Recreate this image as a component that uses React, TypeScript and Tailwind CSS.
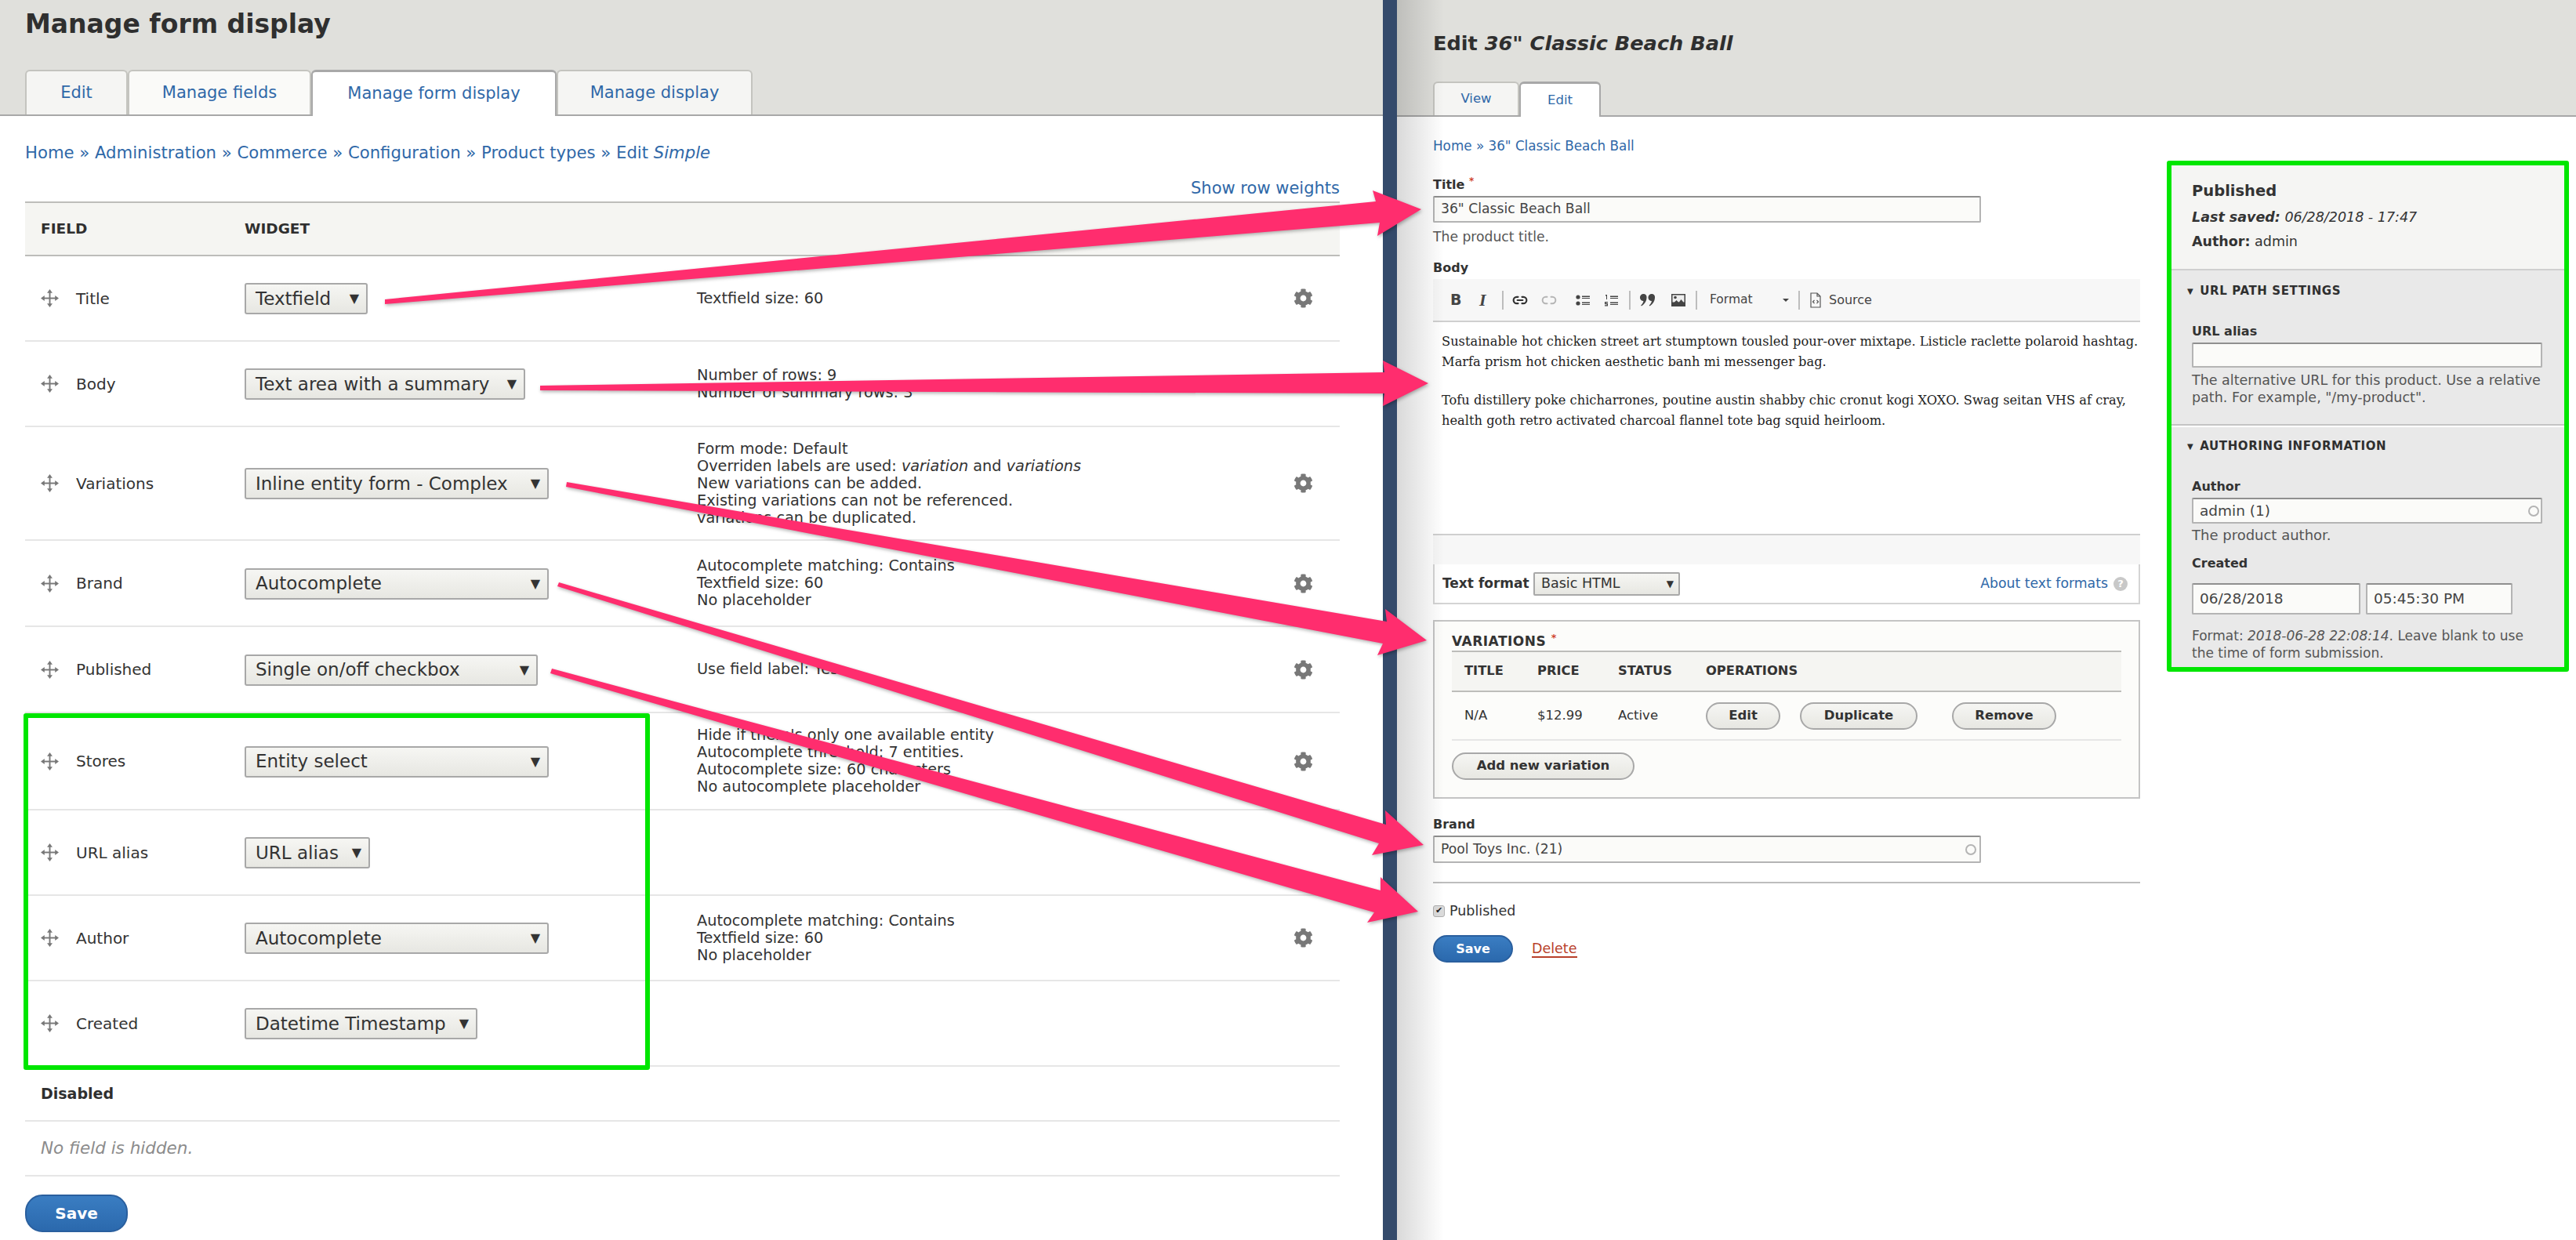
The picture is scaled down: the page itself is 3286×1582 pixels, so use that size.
import type { ReactNode } from "react";
import { FaCog } from "react-icons/fa";
import { Link2, Unlink2 } from "lucide-react";

const ROWS = [
  { label: "Title", widget: "Textfield", width: "w-[157px]", height: "h-[109px]", summary: ["Textfield size: 60"], gear: true },
  { label: "Body", widget: "Text area with a summary", width: "w-[358px]", height: "h-[109px]", summary: ["Number of rows: 9", "Number of summary rows: 3"], gear: false },
  {
    label: "Variations",
    widget: "Inline entity form - Complex",
    width: "w-[388px]",
    height: "h-[145px]",
    summary: [
      "Form mode: Default",
      <>
        Overriden labels are used: <em>variation</em> and <em>variations</em>
      </>,
      "New variations can be added.",
      "Existing variations can not be referenced.",
      "variations can be duplicated.",
    ],
    gear: true,
  },
  { label: "Brand", widget: "Autocomplete", width: "w-[388px]", height: "h-[110px]", summary: ["Autocomplete matching: Contains", "Textfield size: 60", "No placeholder"], gear: true },
  { label: "Published", widget: "Single on/off checkbox", width: "w-[374px]", height: "h-[110px]", summary: ["Use field label: Yes"], gear: true },
];

const GREEN_ROWS = [
  {
    label: "Stores",
    widget: "Entity select",
    width: "w-[388px]",
    height: "h-[124px]",
    summary: ["Hide if there's only one available entity", "Autocomplete threshold: 7 entities.", "Autocomplete size: 60 characters", "No autocomplete placeholder"],
    gear: true,
  },
  { label: "URL alias", widget: "URL alias", width: "w-[160px]", height: "h-[109px]", summary: [], gear: false },
  { label: "Author", widget: "Autocomplete", width: "w-[388px]", height: "h-[109px]", summary: ["Autocomplete matching: Contains", "Textfield size: 60", "No placeholder"], gear: true },
  { label: "Created", widget: "Datetime Timestamp", width: "w-[297px]", height: "h-[109px]", summary: [], gear: false },
];

const ARROWS = [
  "491,382 1755,257 1751,243 1813,267 1757,301 1760,284 491,388",
  "689,492 1766,475 1764,460 1822,489 1764,518 1766,502 689,498",
  "723,615 1769,793 1767,777 1820,817 1757,836 1764,821 722,621",
  "713,743 1768,1052 1767,1034 1816,1078 1750,1091 1759,1076 711,748",
  "704,853 1761,1136 1761,1119 1809,1163 1744,1177 1753,1164 702,859",
];

function DragHandle() {
  return (
    <svg viewBox="0 0 24 24" className="h-[23px] w-[23px] shrink-0 text-[#787878]" fill="currentColor">
      <path d="M11 4h2v16h-2z" />
      <path d="M3 11h18v2H3z" />
      <path d="M12 0l3.600 5H8.400zM12 24l-3.600-5h7.200zM0 12l5-3.600v7.200zM24 12l-5 3.600V8.400z" />
    </svg>
  );
}

function WidgetSelect({ value, width }: { value: string; width: string }) {
  return (
    <div className={`${width} mt-[1px] flex h-[40px] items-center justify-between rounded-[3px] border-2 border-[#a8a8a8] bg-linear-to-b from-[#f6f6f3] to-[#e7e7e2] pl-[12px] pr-[9px] text-[23px] text-[#333]`}>
      <span className="whitespace-nowrap">{value}</span>
      <span className="text-[16px] text-[#333]">▼</span>
    </div>
  );
}

type Row = (typeof ROWS)[number] | (typeof GREEN_ROWS)[number];

function FieldRow({ row }: { row: Row }) {
  return (
    <div className={`${row.height} flex items-center border-b-2 border-[#e6e6e6]`}>
      <div className="flex w-[280px] shrink-0 items-center gap-[22px] pl-[20px] text-[20px] text-[#333]">
        <DragHandle />
        <span>{row.label}</span>
      </div>
      <div className="w-[577px] shrink-0">
        <WidgetSelect value={row.widget} width={row.width} />
      </div>
      <div className="w-[761px] shrink-0 text-[19.300px] leading-[22px] text-[#333]">
        {row.summary.map((line, i) => (
          <div key={i} className="whitespace-nowrap">
            {line}
          </div>
        ))}
      </div>
      {row.gear && <FaCog className="h-[25px] w-[25px] text-[#787878]" />}
    </div>
  );
}

function Tab({ children, width, active, className }: { children: ReactNode; width: string; active?: boolean; className?: string }) {
  return (
    <div
      className={`${width} ${className ?? ""} ${active ? "relative z-10 -mb-[2px] border-x-2 border-t-[3px] border-[#a8a8a8] bg-white" : "border-x-2 border-t-2 border-[#c4c4bf] bg-[#f5f5f3]"} flex items-center justify-center rounded-t-[6px] text-[#2f68a8]`}
    >
      {children}
    </div>
  );
}

function LeftPanel() {
  return (
    <div className="w-[1764px] shrink-0 bg-white">
      <header className="flex h-[148px] flex-col border-b-2 border-[#a8a8a8] bg-[#e0e0dc] pl-[32px]">
        <h1 className="mt-[9px] h-[44px] text-[33px] leading-[44px] font-semibold text-[#2f2f2f]">Manage form display</h1>
        <nav className="mt-[36px] flex h-[57px] text-[21px]">
          <Tab width="w-[131px]">Edit</Tab>
          <Tab width="w-[234px]" className="bg-[#fafaf8]">Manage fields</Tab>
          <Tab width="w-[313px]" active>Manage form display</Tab>
          <Tab width="w-[250px]">Manage display</Tab>
        </nav>
      </header>

      <div className="ml-[32px] w-[1677px]">
        <div className="mt-[33px] h-[28px] text-[21.200px] leading-[28px] text-[#2f68a8]">
          Home » Administration » Commerce » Configuration » Product types » Edit <em>Simple</em>
        </div>
        <div className="mt-[17px] h-[28px] text-right text-[21px] leading-[28px] text-[#2f68a8]">Show row weights</div>

        <div className="mt-[3px] flex h-[70px] items-center border-y-2 border-[#bdbdba] bg-[#f5f5f2] text-[18.500px] font-bold text-[#2f2f2f]">
          <div className="w-[280px] pl-[20px]">FIELD</div>
          <div>WIDGET</div>
        </div>

        {ROWS.map((row) => (
          <FieldRow key={row.label} row={row} />
        ))}

        <div className="relative">
          {GREEN_ROWS.map((row) => (
            <FieldRow key={row.label} row={row} />
          ))}
          <div className="pointer-events-none absolute left-[-2px] top-0 h-[455px] w-[799px] rounded-[3px] border-[6px] border-[#00e600]" />
        </div>

        <div className="flex h-[70px] items-center border-b-2 border-[#e6e6e6] pl-[20px] text-[19px] font-bold text-[#2f2f2f]">Disabled</div>
        <div className="flex h-[70px] items-center border-b-2 border-[#e6e6e6] pl-[20px] text-[21.500px] text-[#8c8c8c] italic">No field is hidden.</div>

        <button className="mt-[23px] h-[48px] w-[131px] rounded-[22px] border-2 border-[#2a5f9e] bg-linear-to-b from-[#3a7dc2] to-[#2b69ad] text-[20px] font-semibold text-white">Save</button>
      </div>
    </div>
  );
}

function Separator() {
  return <span className="block h-[24px] w-[2px] bg-[#bdbdbd]" />;
}

function Toolbar() {
  return (
    <div className="relative flex h-[55px] items-center border-b-2 border-[#cfcfcf] bg-[#f7f7f7] pl-[22px] text-[#444]">
      <span className="w-[37px] text-[19px] font-bold">B</span>
      <span className="w-[29px] font-['Liberation_Serif',serif] text-[22px] font-bold italic">I</span>
      <Separator />
      <Link2 className="ml-[11px] h-[20px] w-[20px] text-[#333]" strokeWidth={2.6} />
      <Unlink2 className="ml-[17px] h-[20px] w-[20px] text-[#b5b5b5]" strokeWidth={2.4} />
      <svg viewBox="0 0 18 16" className="ml-[24px] h-[16px] w-[18px] text-[#444]" fill="currentColor">
        <circle cx="3" cy="4" r="2.600" />
        <circle cx="3" cy="12" r="2.600" />
        <path d="M8 2.500h10v1.500H8zM8 5h10v1H8zM8 10.500h10V12H8zM8 13h10v1H8z" />
      </svg>
      <svg viewBox="0 0 18 16" className="ml-[18px] h-[16px] w-[18px] text-[#444]" fill="currentColor">
        <path d="M2 1h2v6H3V2.500H2zM1 10h4v1.200H2.300V12H5v3.500H1v-1.200h2.800V13.200H1z" />
        <path d="M8 2.500h10v1.500H8zM8 5h10v1H8zM8 10.500h10V12H8zM8 13h10v1H8z" />
      </svg>
      <span className="ml-[14px]"><Separator /></span>
      <svg viewBox="0 0 20 16" className="ml-[12px] h-[16px] w-[20px] text-[#444]" fill="currentColor">
        <path d="M4.500 0a4 4 0 0 1 4 4.500c0 5-3 8.500-6.500 11l-.8-1c2-1.800 3-3.500 3.200-5.500A4.500 4.500 0 0 1 4.500 0zM15 0a4 4 0 0 1 4 4.500c0 5-3 8.500-6.500 11l-.8-1c2-1.800 3-3.500 3.200-5.500A4.500 4.500 0 0 1 15 0z" />
      </svg>
      <svg viewBox="0 0 18 16" className="ml-[20px] h-[16px] w-[18px]">
        <rect width="18" height="16" fill="#444" />
        <rect x="1.500" y="1.500" width="15" height="9" fill="#eee" />
        <circle cx="5" cy="4.500" r="1.800" fill="#444" />
        <path d="M1.500 13l5-5 3 3 3-4 4 5v2h-15z" fill="#444" />
      </svg>
      <span className="ml-[13px]"><Separator /></span>
      <span className="ml-[16px] w-[93px] text-[15.500px]">Format</span>
      <span className="h-0 w-0 border-x-[4px] border-t-[4px] border-x-transparent border-t-[#444]" />
      <span className="ml-[12px]"><Separator /></span>
      <svg viewBox="0 0 14 20" className="ml-[13px] h-[20px] w-[14px] text-[#555]" fill="none" stroke="currentColor" strokeWidth="1.200">
        <path d="M1 1h8l4 4v14H1zM9 1v4h4" />
        <path d="M5.500 10l-2 2 2 2M8.500 10l2 2-2 2" />
      </svg>
      <span className="ml-[10px] text-[16px]">Source</span>
    </div>
  );
}

function VariationButton({ children, width }: { children: ReactNode; width: string }) {
  return (
    <div className={`${width} flex h-[35px] items-center justify-center rounded-[18px] border-2 border-[#a8a8a8] bg-linear-to-b from-[#f6f6f3] to-[#e7e7e2] text-[16.500px] font-semibold text-[#333]`}>
      {children}
    </div>
  );
}

function VariationsBox() {
  return (
    <div className="mt-[20px] h-[228px] border-2 border-[#c4c4c4] bg-[#fcfcfa] px-[22px]">
      <div className="mt-[13px] h-[24px] text-[17px] leading-[24px] font-semibold tracking-[0.5px] text-[#333]">
        VARIATIONS <sup className="text-[#d0452f]">*</sup>
      </div>
      <div className="flex h-[53px] items-center border-y-2 border-[#bdbdba] bg-[#f5f5f2] text-[16.300px] font-semibold text-[#333]">
        <span className="ml-[16px] w-[93px]">TITLE</span>
        <span className="w-[103px]">PRICE</span>
        <span className="w-[112px]">STATUS</span>
        <span>OPERATIONS</span>
      </div>
      <div className="flex h-[62px] items-center border-b-2 border-[#e6e6e6] text-[16.500px] text-[#333]">
        <span className="ml-[16px] w-[93px]">N/A</span>
        <span className="w-[103px]">$12.99</span>
        <span className="w-[112px]">Active</span>
        <VariationButton width="w-[95px]">Edit</VariationButton>
        <span className="ml-[25px]"><VariationButton width="w-[150px]">Duplicate</VariationButton></span>
        <span className="ml-[44px]"><VariationButton width="w-[133px]">Remove</VariationButton></span>
      </div>
      <div className="mt-[15px]"><VariationButton width="w-[233px]">Add new variation</VariationButton></div>
    </div>
  );
}

function TextInput({ value, className, throbber }: { value?: string; className: string; throbber?: boolean }) {
  return (
    <div className={`${className} flex items-center justify-between rounded-[2px] border-2 border-[#b4b4b4] border-t-[#8f8f8f] bg-[#fbfbf9] text-[#444]`}>
      <span>{value}</span>
      {throbber && <span className="h-[14px] w-[14px] rounded-full border-2 border-[#b4b4b4]" />}
    </div>
  );
}

function MainForm() {
  return (
    <div className="ml-[46px] w-[902px] shrink-0 text-[#333]">
      <div className="mt-[24px] h-[26px] text-[16.800px] leading-[26px] text-[#2f68a8]">Home » 36" Classic Beach Ball</div>

      <div className="mt-[25px] h-[24px] text-[16px] leading-[24px] font-semibold">
        Title <sup className="text-[#d0452f]">*</sup>
      </div>
      <TextInput value={'36" Classic Beach Ball'} className="mt-[2px] h-[34px] w-[699px] pl-[8px] text-[17.200px]" />
      <div className="mt-[6px] h-[24px] text-[17.200px] leading-[24px] text-[#555]">The product title.</div>

      <div className="mt-[16px] h-[24px] text-[16px] leading-[24px] font-semibold">Body</div>
      <div className="mt-[2px]">
        <Toolbar />
        <div className="h-[270px] whitespace-nowrap pl-[11px] pt-[12px] font-['DejaVu_Serif',serif] text-[16.250px] leading-[26px] text-[#222]">
          <p>Sustainable hot chicken street art stumptown tousled pour-over mixtape. Listicle raclette polaroid hashtag.<br />Marfa prism hot chicken aesthetic banh mi messenger bag.</p>
          <p className="mt-[23px]">Tofu distillery poke chicharrones, poutine austin shabby chic cronut kogi XOXO. Swag seitan VHS af cray,<br />health goth retro activated charcoal flannel tote bag squid heirloom.</p>
        </div>
        <div className="h-[39px] border-t-2 border-[#cfcfcf] bg-[#f7f7f7]" />
        <div className="flex h-[51px] items-center border-x-2 border-b-2 border-[#d4d4d4] pl-[10px] pr-[14px]">
          <span className="w-[116px] shrink-0 whitespace-nowrap text-[17px] font-semibold">Text format</span>
          <div className="flex h-[30px] w-[187px] items-center justify-between rounded-[2px] border-2 border-[#a8a8a8] bg-linear-to-b from-[#f6f6f3] to-[#e7e7e2] pl-[8px] pr-[6px] text-[17.500px]">
            <span>Basic HTML</span>
            <span className="text-[12px]">▼</span>
          </div>
          <span className="ml-auto text-[17.300px] text-[#2f68a8]">About text formats</span>
          <span className="ml-[7px] flex h-[18px] w-[18px] items-center justify-center rounded-full bg-[#c8c8c8] text-[13px] font-bold text-white">?</span>
        </div>
      </div>

      <VariationsBox />

      <div className="mt-[21px] h-[24px] text-[16px] leading-[24px] font-semibold">Brand</div>
      <TextInput value="Pool Toys Inc. (21)" throbber className="mt-[2px] h-[35px] w-[699px] pl-[8px] pr-[4px] text-[17.200px]" />
      <div className="mt-[24px] h-[2px] bg-[#bdbdbd]" />

      <div className="mt-[23px] flex h-[24px] items-center gap-[6px] text-[17.500px]">
        <span className="flex h-[15px] w-[15px] items-center justify-center rounded-[3px] border border-[#b0b0b0] bg-[#dcdcdc] text-[11px] text-[#222]">✔</span>
        Published
      </div>
      <div className="mt-[19px] flex items-center">
        <button className="h-[35px] w-[102px] rounded-[18px] border-2 border-[#2a5f9e] bg-linear-to-b from-[#3a7dc2] to-[#2b69ad] text-[16px] font-semibold text-white">Save</button>
        <span className="ml-[24px] border-b-2 border-[#b8402a] text-[17.500px] leading-[20px] text-[#b8402a]">Delete</span>
      </div>
    </div>
  );
}

function Sidebar() {
  return (
    <aside className="ml-[34px] mt-[56px] h-[652px] w-[513px] shrink-0 overflow-hidden rounded-[3px] border-[6px] border-[#00e600] bg-[#e9e9e9] text-[17.500px] text-[#333]">
      <div className="h-[132px] bg-[#f5f5f3] pl-[26px] pt-[19px]">
        <div className="h-[28px] text-[19.500px] leading-[28px] font-bold">Published</div>
        <div className="mt-[7px] h-[24px] leading-[24px] italic"><b>Last saved:</b> 06/28/2018 - 17:47</div>
        <div className="mt-[7px] h-[24px] leading-[24px]"><b>Author:</b> admin</div>
      </div>

      <div className="h-[200px] border-t-2 border-b-2 border-t-[#cfcfcf] border-b-[#c4c4c4] pl-[26px] pt-[14px]">
        <div className="-ml-[6px] flex h-[24px] items-center gap-[8px] text-[15px] font-bold tracking-[0.6px] text-[#2f2f2f]">
          <span className="text-[10px]">▼</span> URL PATH SETTINGS
        </div>
        <div className="mt-[28px] h-[24px] text-[16px] leading-[24px] font-bold">URL alias</div>
        <TextInput className="mt-[2px] h-[32px] w-[447px]" />
        <div className="mt-[5px] whitespace-nowrap text-[17.500px] leading-[22px] text-[#555]">
          The alternative URL for this product. Use a relative<br />path. For example, "/my-product".
        </div>
      </div>

      <div className="border-t-2 border-white pl-[26px] pt-[12px]">
        <div className="-ml-[6px] flex h-[24px] items-center gap-[8px] text-[15px] font-bold tracking-[0.6px] text-[#2f2f2f]">
          <span className="text-[10px]">▼</span> AUTHORING INFORMATION
        </div>
        <div className="mt-[28px] h-[24px] text-[16px] leading-[24px] font-bold">Author</div>
        <TextInput value="admin (1)" throbber className="mt-[2px] h-[33px] w-[447px] pl-[8px] pr-[2px] text-[18.500px]" />
        <div className="mt-[3px] h-[24px] text-[18px] leading-[24px] text-[#555]">The product author.</div>
        <div className="mt-[12px] h-[24px] text-[16px] leading-[24px] font-bold">Created</div>
        <div className="mt-[13px] flex gap-[7px] text-[18.500px]">
          <TextInput value="06/28/2018" className="h-[40px] w-[215px] pl-[8px]" />
          <TextInput value="05:45:30 PM" className="h-[40px] w-[187px] pl-[8px]" />
        </div>
        <div className="mt-[16px] whitespace-nowrap text-[17px] leading-[22px] text-[#555]">
          Format: <em>2018-06-28 22:08:14</em>. Leave blank to use<br />the time of form submission.
        </div>
      </div>
    </aside>
  );
}

function RightPanel() {
  return (
    <div className="relative flex-1 bg-white">
      <header className="flex h-[149px] flex-col border-b-2 border-[#a8a8a8] bg-[#e0e0dc] pl-[46px]">
        <h1 className="mt-[36px] h-[38px] text-[25.600px] leading-[38px] font-semibold text-[#2f2f2f]">
          Edit <em>36" Classic Beach Ball</em>
        </h1>
        <nav className="mt-[30px] flex h-[43px] text-[16.500px]">
          <Tab width="w-[110px]">View</Tab>
          <Tab width="w-[104px]" active>Edit</Tab>
        </nav>
      </header>
      <div className="flex">
        <MainForm />
        <Sidebar />
      </div>
      <div className="pointer-events-none absolute left-0 top-0 h-full w-[60px] bg-linear-to-r from-black/15 to-transparent" />
    </div>
  );
}

export default function App() {
  return (
    <div className="relative flex h-[1582px] w-[3286px] overflow-hidden bg-white font-['DejaVu_Sans',sans-serif]">
      <LeftPanel />
      <div className="w-[18px] shrink-0 bg-[#344a6b]" />
      <RightPanel />
      <svg viewBox="0 0 3286 1582" className="pointer-events-none absolute left-0 top-0 h-[1582px] w-[3286px] drop-shadow-[1px_2px_2px_rgba(0,0,0,0.3)]">
        {ARROWS.map((points) => (
          <polygon key={points} points={points} fill="#ff2d6e" />
        ))}
      </svg>
    </div>
  );
}
